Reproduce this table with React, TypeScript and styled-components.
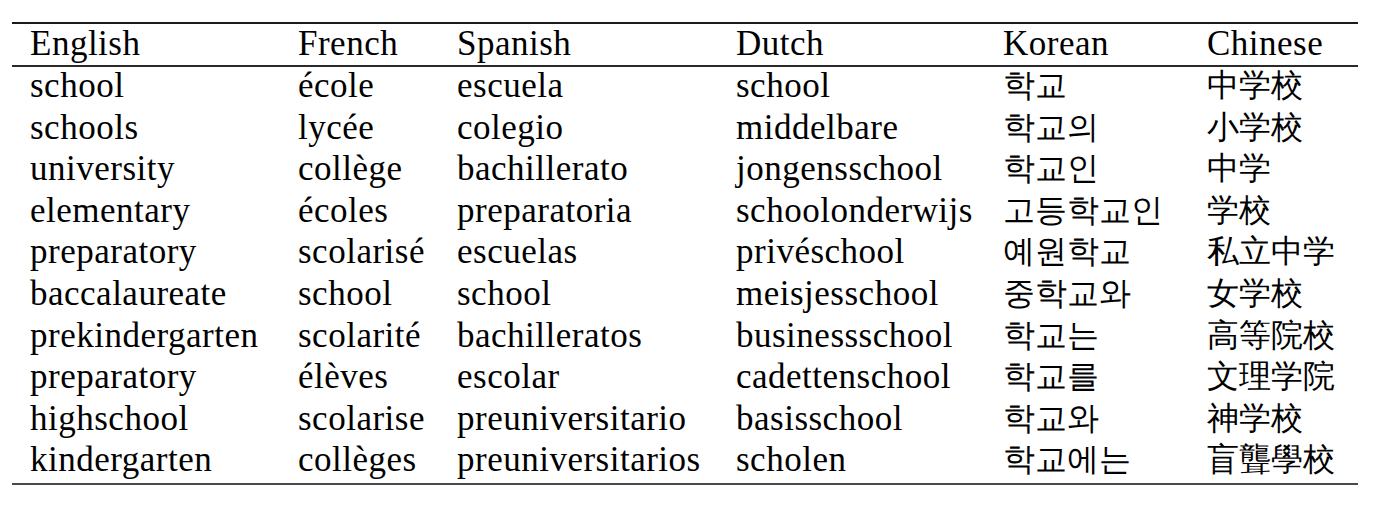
import React from "react";
import styled, { createGlobalStyle } from "styled-components";

const Global = createGlobalStyle`
  html, body { margin: 0; padding: 0; background: #ffffff; }
`;

const Page = styled.div`
  padding: 22px 0 0 12px;
`;

const Grid = styled.div`
  width: 1346px;
  display: grid;
  grid-template-columns: 268px 159px 279px 267px 204px 169px;
  border-top: 2px solid #1a1a1a;
  border-bottom: 2px solid #4a4a4a;
  font-family: "Liberation Serif", serif;
  color: #000;
`;

const Head = styled.div`
  font-size: 35px;
  letter-spacing: 0.5px;
  line-height: 37px;
  padding: 1px 18px 3px;
  border-bottom: 2px solid #2a2a2a;
  white-space: nowrap;
`;

const Cell = styled.div`
  font-size: 35px;
  letter-spacing: 0.5px;
  line-height: 37px;
  padding: 0 18px 4.6px;
  white-space: nowrap;
`;

const KoreanCell = styled(Cell)`
  font-size: 32px;
  font-weight: 300;
  letter-spacing: 0;
`;

const ChineseCell = styled(Cell)`
  font-size: 32px;
  letter-spacing: 0;
`;

const headers = ["English", "French", "Spanish", "Dutch", "Korean", "Chinese"];

const rows: string[][] = [
  ["school", "école", "escuela", "school", "학교", "中学校"],
  ["schools", "lycée", "colegio", "middelbare", "학교의", "小学校"],
  ["university", "collège", "bachillerato", "jongensschool", "학교인", "中学"],
  ["elementary", "écoles", "preparatoria", "schoolonderwijs", "고등학교인", "学校"],
  ["preparatory", "scolarisé", "escuelas", "privéschool", "예원학교", "私立中学"],
  ["baccalaureate", "school", "school", "meisjesschool", "중학교와", "女学校"],
  ["prekindergarten", "scolarité", "bachilleratos", "businessschool", "학교는", "高等院校"],
  ["preparatory", "élèves", "escolar", "cadettenschool", "학교를", "文理学院"],
  ["highschool", "scolarise", "preuniversitario", "basisschool", "학교와", "神学校"],
  ["kindergarten", "collèges", "preuniversitarios", "scholen", "학교에는", "盲聾學校"],
];

export default function App() {
  return (
    <Page>
      <Global />
      <Grid>
        {headers.map((h) => (
          <Head key={h}>{h}</Head>
        ))}
        {rows.map((r, ri) => (
          <React.Fragment key={ri}>
            <Cell>{r[0]}</Cell>
            <Cell>{r[1]}</Cell>
            <Cell>{r[2]}</Cell>
            <Cell>{r[3]}</Cell>
            <KoreanCell>{r[4]}</KoreanCell>
            <ChineseCell>{r[5]}</ChineseCell>
          </React.Fragment>
        ))}
      </Grid>
    </Page>
  );
}
